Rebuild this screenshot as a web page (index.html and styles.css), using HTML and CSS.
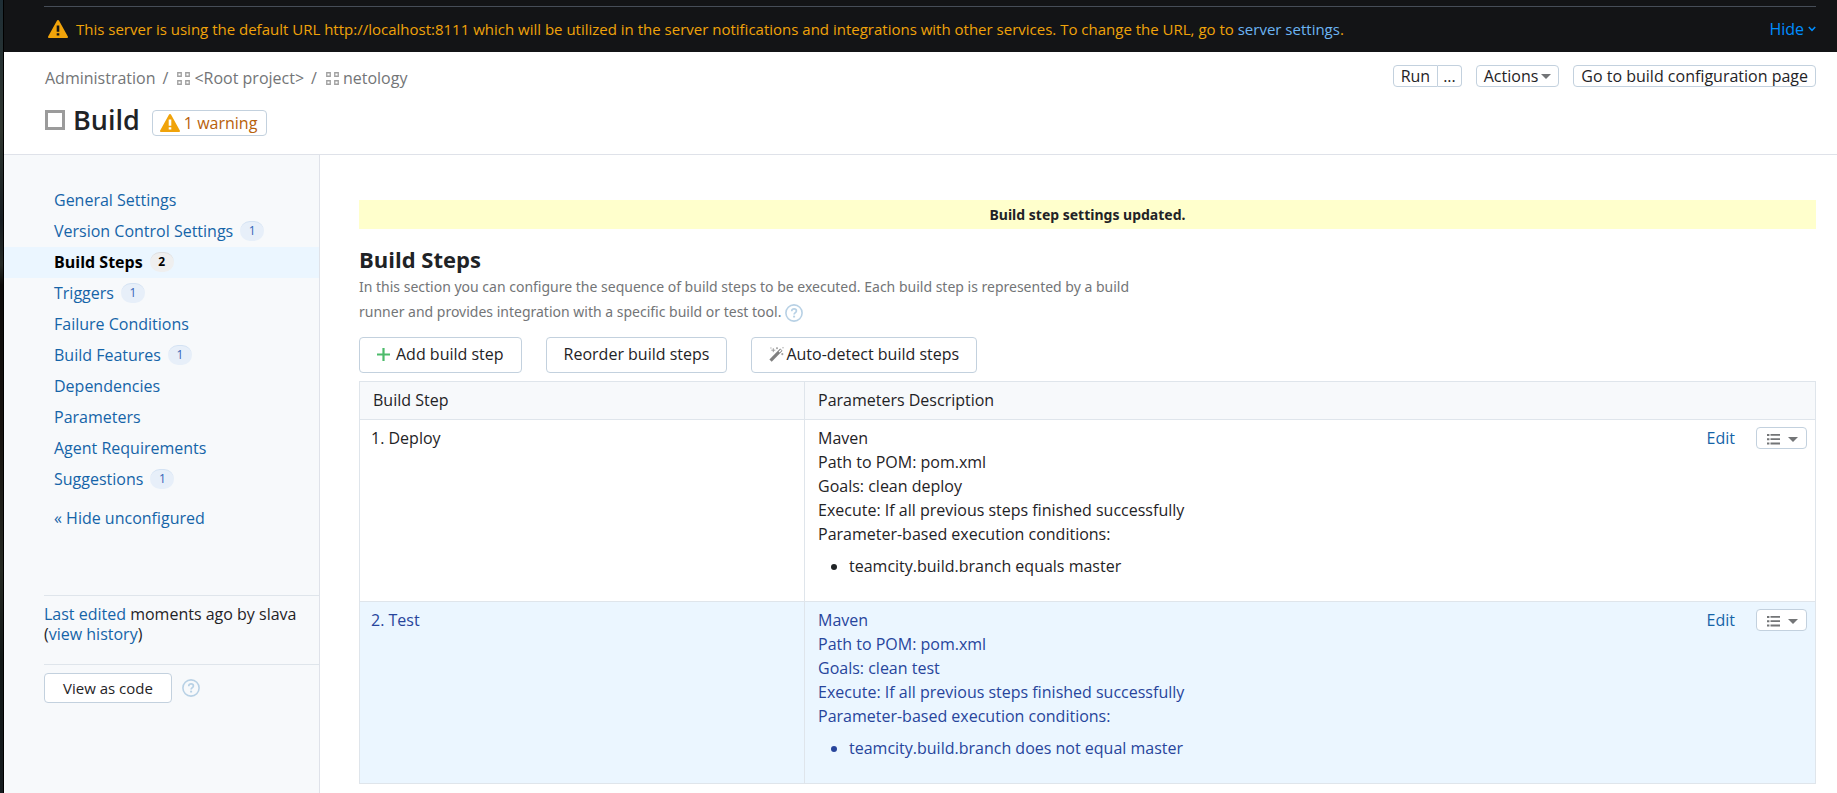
FILE: index.html
```html
<!DOCTYPE html>
<html lang="en">
<head>
<meta charset="utf-8">
<title>Build Steps</title>
<link rel="stylesheet" href="styles.css">
</head>
<body>
<svg class="sprite" aria-hidden="true">
  <symbol id="warn" viewBox="0 0 20 18"><path d="M8.9.8a1.2 1.2 0 0 1 2.2 0l8.6 15.4A1.1 1.1 0 0 1 18.800 18H1.200a1.100 1.100 0 0 1-.9-1.800z" fill="#f0a30a"/><path d="M8.700 5.500h2.600v6.300H8.700zm0 7.700h2.600v2.400H8.700z" fill="currentColor"/></symbol>
  <symbol id="project" viewBox="0 0 13 13"><path d="M.75.75h3.500v3.500h-3.500zm8 0h3.500v3.500h-3.500zm-8 8h3.500v3.500h-3.500zm8 0h3.500v3.500h-3.500z" fill="none" stroke="#a0a0a0" stroke-width="1.300"/></symbol>
  <symbol id="caret" viewBox="0 0 10 5"><path d="M0 0h10L5 5z" fill="#737577"/></symbol>
  <symbol id="help" viewBox="0 0 18 18"><circle cx="9" cy="9" r="8.100" fill="none" stroke="#b8d1e5" stroke-width="1.600"/><path d="M6.700 7.200c0-1.500 1-2.300 2.400-2.300s2.300.8 2.300 2c0 1.700-2.300 1.700-2.300 3.600" fill="none" stroke="#b8d1e5" stroke-width="1.700"/><path d="M8.100 11.700h2v1.800h-2z" fill="#b8d1e5"/></symbol>
  <symbol id="list" viewBox="0 0 13 11"><path d="M0 0h2.400v2H0zm0 4.300h2.400v2H0zm0 4.300h2.400v2H0zM3.500 0H13v1.800H3.500zm0 4.300H13v1.800H3.500zm0 4.300H13v1.800H3.500z" fill="#737577"/></symbol>
</svg>
<div class="page">
  <div class="edge"></div>
  <div class="app">
    <div class="topbar">
      <div class="notice">
        <svg class="warn-icon"><use href="#warn"/></svg>
        <p class="notice-text">This server is using the default URL http://localhost:8111 which will be utilized in the server notifications and integrations with other services. To change the URL, go to <a href="#">server settings</a>.</p>
        <button class="hide" type="button">Hide <svg width="8" height="6" viewBox="0 0 8 6"><path d="M.8 1 4 4.300 7.200 1" fill="none" stroke="currentColor" stroke-width="1.500"/></svg></button>
      </div>
    </div>
    <header class="header">
      <div class="header-row">
        <nav class="crumbs" aria-label="Breadcrumb">
          <a href="#">Administration</a><span>/</span>
          <a href="#"><svg class="project"><use href="#project"/></svg>&lt;Root project&gt;</a><span>/</span>
          <a href="#"><svg class="project"><use href="#project"/></svg>netology</a>
        </nav>
        <div class="actions">
          <div class="group"><button class="small" type="button">Run</button><button class="small more" type="button">...</button></div>
          <button class="small" type="button">Actions <svg width="10" height="5"><use href="#caret"/></svg></button>
          <button class="small" type="button">Go to build configuration page</button>
        </div>
      </div>
      <div class="title-row">
        <span class="status"></span>
        <h1>Build</h1>
        <button class="warning" type="button"><svg class="warn-icon"><use href="#warn"/></svg>1 warning</button>
      </div>
    </header>
    <div class="body">
      <aside class="sidebar">
        <nav class="menu" aria-label="Settings">
          <a href="#">General Settings</a>
          <a href="#">Version Control Settings <span class="count">1</span></a>
          <a href="#" class="active" aria-current="page">Build Steps <span class="count">2</span></a>
          <a href="#">Triggers <span class="count">1</span></a>
          <a href="#">Failure Conditions</a>
          <a href="#">Build Features <span class="count">1</span></a>
          <a href="#">Dependencies</a>
          <a href="#">Parameters</a>
          <a href="#">Agent Requirements</a>
          <a href="#">Suggestions <span class="count">1</span></a>
          <a href="#" class="toggle">« Hide unconfigured</a>
        </nav>
        <p class="edited"><a href="#">Last edited</a> moments ago by slava<br>(<a href="#">view history</a>)</p>
        <div class="code">
          <button class="code-button" type="button">View as code</button>
          <a href="#" class="help-link" aria-label="Help"><svg class="help"><use href="#help"/></svg></a>
        </div>
      </aside>
      <main class="main">
        <div class="message" role="status">Build step settings updated.</div>
        <h2>Build Steps</h2>
        <p class="intro">In this section you can configure the sequence of build steps to be executed. Each build step is represented by a build<br>runner and provides integration with a specific build or test tool. <a href="#" class="help-link" aria-label="Help"><svg class="help"><use href="#help"/></svg></a></p>
        <div class="toolbar">
          <button class="tool" type="button"><svg width="13" height="13" viewBox="0 0 13 13"><path d="M6.500 0v13M0 6.500h13" stroke="#4dbb6b" stroke-width="2.200"/></svg>Add build step</button>
          <button class="tool" type="button">Reorder build steps</button>
          <button class="tool wand" type="button"><svg width="15" height="15" viewBox="0 0 15 15"><path d="M.4 12.400 11.200 1.500l2.300 2.300L2.700 14.700z" fill="#808080"/><path d="m9.600 4.400 2-2 1 1-2 2z" fill="#fff"/><path d="M4.300 1.200v4M2.300 3.200h4M8 .2v2M7 1.200h2M13.300 6v2.200M12.200 7.100h2.200M14 0v1.400M1.300 1h1.200" stroke="#999" stroke-width=".9"/></svg>Auto-detect build steps</button>
        </div>
        <table class="steps">
          <thead><tr><th class="name">Build Step</th><th>Parameters Description</th></tr></thead>
          <tbody>
            <tr>
              <td>1. Deploy</td>
              <td><div class="cell"><div class="details"><div>Maven</div><div>Path to POM: pom.xml</div><div>Goals: clean deploy</div><div>Execute: If all previous steps finished successfully</div><div>Parameter-based execution conditions:</div><ul><li>teamcity.build.branch equals master</li></ul></div>
              <a href="#" class="edit">Edit</a><button class="small menu-button" type="button" aria-label="Step actions"><svg width="13" height="11"><use href="#list"/></svg><svg width="10" height="5"><use href="#caret"/></svg></button></div></td>
            </tr>
            <tr class="selected">
              <td>2. Test</td>
              <td><div class="cell"><div class="details"><div>Maven</div><div>Path to POM: pom.xml</div><div>Goals: clean test</div><div>Execute: If all previous steps finished successfully</div><div>Parameter-based execution conditions:</div><ul><li>teamcity.build.branch does not equal master</li></ul></div>
              <a href="#" class="edit">Edit</a><button class="small menu-button" type="button" aria-label="Step actions"><svg width="13" height="11"><use href="#list"/></svg><svg width="10" height="5"><use href="#caret"/></svg></button></div></td>
            </tr>
          </tbody>
        </table>
      </main>
    </div>
  </div>
</div>
</body>
</html>
```
FILE: styles.css
```css
* { box-sizing: border-box; }
body { margin: 0; color: #1f2326; background: #fff; font: 16px/20px "Open Sans", "Noto Sans", sans-serif; }
a { color: #1564a8; text-decoration: none; }
p, h1, h2, ul { margin: 0; }
button { font: inherit; color: inherit; background: #fff; border: 1px solid #c3d1de; border-radius: 4px; padding: 0; white-space: nowrap; }
svg { display: block; flex: none; }
.sprite { position: absolute; width: 0; height: 0; }
.page { display: grid; grid-template-columns: 4px minmax(0, 1fr); min-height: 100vh; }
.edge { border-right: 1px solid #000; background: linear-gradient(#1e2e36 0, #30362f 130px, #262e2b 160px, #161d22 220px, #262a26 265px, #0c0b0a 285px, #17130f 430px, #262a23 570px, #121817 660px, #161c1f 100%); }
.app { display: flex; flex-direction: column; }

.topbar { padding: 6px 21px 0 40px; background: #131416; }
.notice { display: flex; align-items: center; height: 46px; padding: 0 0 2px 4px; border-top: 1px solid #464d57; font-size: 15px; color: #f0a30a; }
.notice .warn-icon { color: #131416; }
.warn-icon { width: 20px; height: 18px; }
.notice-text { flex: 1; margin-left: 8px; }
.notice-text a { color: #6cb4f2; }
.hide { display: flex; align-items: center; gap: 4px; border: 0; background: none; color: #008eff; font-size: 16px; }

.header { padding: 13px 21px 16px 41px; border-bottom: 1px solid #dfe2e9; }
.header-row { display: flex; justify-content: space-between; align-items: flex-start; }
.crumbs { display: flex; align-items: center; gap: 7px; height: 26px; color: #737577; }
.crumbs a { display: flex; align-items: center; gap: 4px; color: #737577; }
.project { width: 13px; height: 13px; }
.crumbs span { margin-right: 2px; }
.actions { display: flex; gap: 14px; }
.small { display: flex; align-items: center; justify-content: center; gap: 3px; height: 22px; padding: 0 7px; }
.group { display: flex; }
.group .small:first-child { border-radius: 4px 0 0 4px; }
.group .more { border-left: 0; border-radius: 0 4px 4px 0; padding: 0 5px; }
.title-row { display: flex; align-items: center; height: 36px; margin-top: 11px; }
.status { width: 20px; height: 20px; border: 3px solid #9b9b9b; }
h1 { margin-left: 8px; font-size: 27px; line-height: 32px; font-weight: 600; }
.warning { display: flex; align-items: center; gap: 4px; height: 26px; margin: 5px 0 0 12px; padding: 0 9px 0 7px; color: #b8610b; }
.warning .warn-icon { color: #fff; }

.body { flex: 1; display: grid; grid-template-columns: 316px minmax(0, 1fr); }
.sidebar { padding: 30px 0 0; background: #f7f9fb; border-right: 1px solid #dfe2e9; }
.menu { display: flex; flex-direction: column; }
.menu a { display: flex; align-items: center; height: 31px; padding: 0 0 1px 50px; }
.menu .active { background: #ebf6ff; color: #000; font-weight: 700; }
.count { min-width: 24px; height: 20px; margin-left: 7px; padding: 0 7px; border-top: 1px solid #d3e2f3; border-radius: 10px; background: #e7eff9; color: #3464b8; font-size: 12px; line-height: 18px; text-align: center; }
.active .count { border-color: #dedede; background: #efefef; color: #000; }
.menu .toggle { margin-top: 8px; }
.edited { margin: 61px 0 0 40px; padding: 8px 0 20px; border-top: 1px solid #dfe5eb; }
.code { display: flex; align-items: center; gap: 10px; margin-left: 40px; padding-top: 8px; border-top: 1px solid #dfe5eb; }
.code-button { height: 30px; padding: 0 18px; font-size: 15px; }
.help { width: 18px; height: 18px; }

.main { padding: 45px 21px 0 39px; }
.message { padding: 4px; background: #ffc; text-align: center; font-family: "Noto Sans", sans-serif; font-size: 14px; line-height: 21px; font-weight: 700; }
h2 { margin-top: 16px; font-size: 22px; line-height: 28px; }
.intro { margin-top: 1px; color: #737577; font-family: "Noto Sans", sans-serif; font-size: 14px; line-height: 25px; }
.intro .help-link { display: inline-block; vertical-align: middle; }
.toolbar { display: flex; gap: 24px; margin-top: 13px; }
.tool { display: flex; align-items: center; gap: 6px; height: 36px; padding: 0 17px 2px; }
.tool.wand { gap: 2px; }
.steps { width: 100%; margin-top: 8px; border-collapse: collapse; table-layout: fixed; line-height: 24px; }
.steps th, .steps td { padding: 0; border: 1px solid #dfe5eb; text-align: left; vertical-align: top; font-weight: 400; }
.steps th { padding: 6px 13px 7px; background: #f7f9fb; }
.steps .name { width: 445px; }
.steps td { padding: 6px 8px 23px 11px; }
.steps td:last-child { padding-left: 13px; }
.cell { display: flex; align-items: flex-start; }
.details { flex: 1; }
.details ul { margin-top: 8px; padding-left: 31px; }
.edit { margin-right: 21px; }
.menu-button { gap: 8px; width: 51px; margin-top: 1px; padding: 2px 0 0 2px; }
.selected { background: #ebf6ff; color: #27459c; }
```
